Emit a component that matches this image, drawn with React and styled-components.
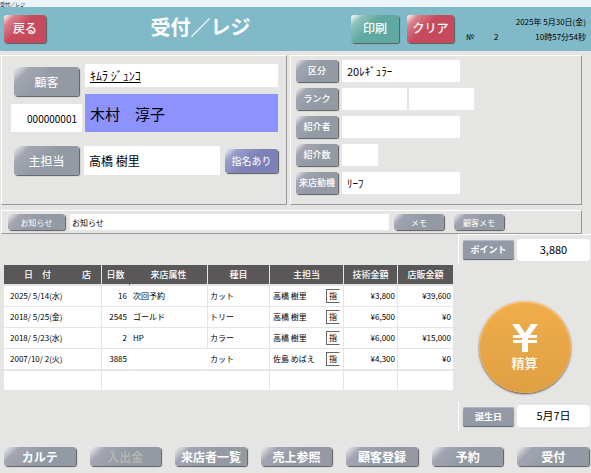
import React, { useState } from "react";
import styled, { createGlobalStyle } from "styled-components";

const history = [
  { date: "2025/ 5/14(水)", days: 16, kind: "次回予約", menu: "カット", staff: "高橋 樹里", tech: "¥3,800", shop: "¥39,600" },
  { date: "2018/ 5/25(金)", days: 2545, kind: "ゴールド", menu: "トリー", staff: "高橋 樹里", tech: "¥6,500", shop: "¥0" },
  { date: "2018/ 5/23(水)", days: 2, kind: "HP", menu: "カラー", staff: "高橋 樹里", tech: "¥6,000", shop: "¥15,000" },
  { date: "2007/10/ 2(火)", days: 3885, kind: "", menu: "カット", staff: "佐島 めばえ", tech: "¥4,300", shop: "¥0", joined: true },
];

const columns = [98, 28, 78, 62, 74, 54, 55];

const menu = [
  { label: "カルテ" },
  { label: "入出金", disabled: true },
  { label: "来店者一覧" },
  { label: "売上参照" },
  { label: "顧客登録" },
  { label: "予約" },
  { label: "受付" },
];

function Field({ label, ...rest }) {
  const [value, setValue] = useState(rest.value || "");
  return (
    <Input
      {...rest}
      aria-label={label}
      value={value}
      onChange={(e) => setValue(e.target.value)}
    />
  );
}

function App() {
  return (
    <>
      <GlobalStyle />
      <Page>
        <WindowBar>受付／レジ</WindowBar>
        <Header>
          <HeaderButton $color="#c74a5c" $width={42}>戻る</HeaderButton>
          <h1>受付／レジ</h1>
          <HeaderButton $color="#5fa9a0" $width={48}>印刷</HeaderButton>
          <HeaderButton $color="#c74a5c" $width={47}>クリア</HeaderButton>
          <Clock>
            <div>2025年 5月30日(金)</div>
            <div className="time">
              <span>№</span>
              <span>2</span>
              <span className="right">10時57分54秒</span>
            </div>
          </Clock>
        </Header>

        <Panels>
          <Panel>
            <Customer>
              <div className="code">
                <PanelButton>顧客</PanelButton>
                <Field label="顧客番号" value="000000001" $height={28} $align="right" $size={10} />
              </div>
              <div className="names">
                <Field label="フリガナ" value="ｷﾑﾗ ｼﾞｭﾝｺ" $height={23} $size={12} $underline />
                <Field label="氏名" value="木村　淳子" $height={38} $size={15} $bg="#8c93ff" />
              </div>
            </Customer>
            <Staff>
              <PanelButton>主担当</PanelButton>
              <Field label="主担当" value="高橋 樹里" $height={29} $size={12} />
              <Nominate>指名あり</Nominate>
            </Staff>
          </Panel>
          <Panel>
            <Attributes>
              <Attribute>
                <SmallButton>区分</SmallButton>
                <Field label="区分" value="20ﾚｷﾞｭﾗｰ" $width={118} $height={22} $size={11} />
              </Attribute>
              <Attribute>
                <SmallButton>ランク</SmallButton>
                <Pair>
                  <Field label="ランク" $width={65} $height={22} />
                  <Field label="ランク名" $width={65} $height={22} />
                </Pair>
              </Attribute>
              <Attribute>
                <SmallButton>紹介者</SmallButton>
                <Field label="紹介者" $width={118} $height={22} />
              </Attribute>
              <Attribute>
                <SmallButton>紹介数</SmallButton>
                <Field label="紹介数" $width={36} $height={22} />
              </Attribute>
              <Attribute>
                <SmallButton>来店動機</SmallButton>
                <Field label="来店動機" value="ﾘｰﾌ" $width={118} $height={22} $size={11} />
              </Attribute>
            </Attributes>
          </Panel>
        </Panels>

        <Notice>
          <NoticeButton $width={57}>お知らせ</NoticeButton>
          <Field label="お知らせ" value="お知らせ" $height={16} $size={8} $pad={2} />
          <div className="memos">
            <NoticeButton $width={50}>メモ</NoticeButton>
            <NoticeButton $width={50}>顧客メモ</NoticeButton>
          </div>
        </Notice>

        <Main>
          <History>
            <colgroup>
              {columns.map((width, index) => (
                <Column key={index} $width={width} />
              ))}
            </colgroup>
            <thead>
              <tr>
                <th>
                  <DateHead>
                    <span>日　付</span>
                    <span>店</span>
                  </DateHead>
                </th>
                <th className="joined">日数</th>
                <th>来店属性</th>
                <th>種目</th>
                <th>主担当</th>
                <th>技術金額</th>
                <th>店販金額</th>
              </tr>
            </thead>
            <tbody>
              {history.map((row) => (
                <tr key={row.date}>
                  <td>{row.date}</td>
                  <td className="num joined">{row.days}</td>
                  <td className={row.joined ? "joined" : ""}>{row.kind}</td>
                  <td className="item">{row.menu}</td>
                  <td>
                    <StaffCell>
                      {row.staff}
                      <Mark>指</Mark>
                    </StaffCell>
                  </td>
                  <td className="num">{row.tech}</td>
                  <td className="num">{row.shop}</td>
                </tr>
              ))}
              <tr className="blank">
                <td />
                <td className="joined" />
                <td className="joined" />
                <td />
                <td />
                <td />
                <td />
              </tr>
            </tbody>
          </History>

          <Side>
            <Info $top>
              <InfoButton>ポイント</InfoButton>
              <output>3,880</output>
            </Info>
            <PayButton>
              <svg viewBox="0 0 26 28" aria-hidden="true">
                <path
                  d="M0 0H7L13 9L19 0H26L18 11H25V14H16V16H25V19H16V28H10V19H1V16H10V14H1V11H8Z"
                  fill="#fff"
                />
              </svg>
              <span>精算</span>
            </PayButton>
            <Info>
              <InfoButton>誕生日</InfoButton>
              <output>5月7日</output>
            </Info>
          </Side>
        </Main>

        <Footer>
          {menu.map((item) => (
            <FooterButton key={item.label} disabled={item.disabled}>
              {item.label}
            </FooterButton>
          ))}
        </Footer>
      </Page>
    </>
  );
}

const GlobalStyle = createGlobalStyle`
  * {
    box-sizing: border-box;
  }
  body {
    margin: 0;
    background: #e5e5e4;
    color: #000;
    font-family: "Noto Sans CJK JP", sans-serif;
    font-size: 9px;
  }
`;

const Page = styled.div`
  display: flex;
  flex-direction: column;
`;

const WindowBar = styled.div`
  background: #edf3fb;
  font-size: 5px;
  line-height: 7px;
`;

const Header = styled.header`
  display: flex;
  align-items: center;
  gap: 8px;
  height: 44px;
  padding: 0 5px 0 4px;
  background: #80bac9;
  h1 {
    flex: 1;
    margin: 0;
    color: #fff;
    text-align: center;
    font-size: 20px;
    line-height: 32px;
    padding: 0 0 4px 4px;
  }
`;

const BaseButton = styled.button`
  flex: none;
  padding: 0;
  border: 0;
  border-radius: 3px;
  color: #fff;
  font-family: inherit;
  white-space: nowrap;
  cursor: pointer;
  background: linear-gradient(135deg, #f2f2f4 0, #a2a5b1 18%, #939aa4 50%);
  box-shadow: 1px 1px 1px #5b5b60;
`;

const HeaderButton = styled(BaseButton)`
  width: ${(p) => p.$width}px;
  height: 28px;
  padding-bottom: 4px;
  font-size: 12px;
  font-weight: 500;
  background: linear-gradient(
    135deg,
    #fff 0,
    color-mix(in srgb, ${(p) => p.$color} 70%, #fff) 16%,
    ${(p) => p.$color} 42%
  );
`;

const Clock = styled.div`
  display: flex;
  flex-direction: column;
  width: 124px;
  font-size: 8px;
  line-height: 15px;
  text-align: right;
  .time {
    display: flex;
    gap: 20px;
    padding-left: 4px;
  }
  .right {
    flex: 1;
  }
`;

const Panels = styled.div`
  display: grid;
  grid-template-columns: 286fr 292fr;
  gap: 3px;
  padding: 4px 9px 0 1px;
`;

const Panel = styled.section`
  height: 150px;
  padding: 8px 8px 0 9px;
  border: 1px solid #fff;
  border-right-color: #999;
  border-bottom-color: #999;
`;

const Input = styled.input`
  flex: ${(p) => (p.$width ? "none" : "1 1 0")};
  min-width: 0;
  width: ${(p) => (p.$width ? `${p.$width}px` : "100%")};
  height: ${(p) => p.$height}px;
  padding: 0 ${(p) => p.$pad || 5}px;
  border: 0;
  outline: 0;
  color: #000;
  background: ${(p) => p.$bg || "#fff"};
  font-family: inherit;
  font-size: ${(p) => p.$size || 11}px;
  text-align: ${(p) => p.$align || "left"};
  text-decoration: ${(p) => (p.$underline ? "underline" : "none")};
`;

const Customer = styled.div`
  display: flex;
  gap: 3px;
  .code {
    display: flex;
    flex-direction: column;
    align-items: center;
    justify-content: space-between;
    width: 71px;
    padding-top: 3px;
  }
  .names {
    display: flex;
    flex: 1;
    flex-direction: column;
    gap: 7px;
  }
  input {
    flex: none;
  }
`;

const PanelButton = styled(BaseButton)`
  width: 65px;
  height: 29px;
  font-size: 12px;
`;

const Staff = styled.div`
  display: flex;
  align-items: center;
  gap: 5px;
  margin-top: 14px;
  padding-left: 3px;
`;

const Nominate = styled(BaseButton)`
  width: 53px;
  height: 24px;
  font-size: 10px;
  background: linear-gradient(135deg, #f2f2f8 0, #989dc9 18%, #7c82b7 50%);
`;

const Attributes = styled.div`
  display: flex;
  flex-direction: column;
  gap: 6px;
  margin: -4px 0 0 -4px;
`;

const Attribute = styled.div`
  display: flex;
  gap: 4px;
`;

const Pair = styled.div`
  display: flex;
  gap: 2px;
`;

const SmallButton = styled(BaseButton)`
  width: 42px;
  height: 22px;
  padding-bottom: 2px;
  border-radius: 2px;
  font-size: 9px;
  font-weight: 500;
`;

const Notice = styled.section`
  display: flex;
  align-items: center;
  gap: 5px;
  height: 24px;
  margin: 5px 9px 0 1px;
  padding: 0 77px 0 6px;
  border: 1px solid #fff;
  border-right-color: #999;
  border-bottom-color: #999;
  .memos {
    display: flex;
    gap: 10px;
  }
`;

const NoticeButton = styled(BaseButton)`
  width: ${(p) => p.$width}px;
  height: 16px;
  font-size: 8px;
`;

const Main = styled.main`
  display: flex;
  align-items: flex-start;
  gap: 5px;
  padding-left: 4px;
`;

const Column = styled.col`
  width: ${(p) => p.$width}px;
`;

const History = styled.table`
  flex: 1;
  table-layout: fixed;
  margin-top: 31px;
  border-collapse: separate;
  border-spacing: 0;
  font-size: 8px;
  line-height: 12px;
  white-space: nowrap;
  th,
  td {
    height: 21px;
    padding: 0 3px;
    border-right: 1px solid #e5e5e4;
    border-bottom: 1px solid #e5e5e4;
    background: #fff;
  }
  th {
    border-bottom-width: 2px;
    background: #5a5758;
    color: #fff;
    font-size: 9px;
    font-weight: 500;
  }
  td:first-child {
    padding-left: 6px;
  }
  th:last-child,
  td:last-child {
    border-right: 0;
  }
  td.joined {
    border-right-color: #fff;
  }
  th.joined {
    border-right-color: #5a5758;
  }
  .num {
    text-align: right;
    padding-right: 2px;
  }
  .item {
    padding-left: 2px;
  }
  .blank td {
    border-top: 1px solid #e5e5e4;
  }
`;

const DateHead = styled.div`
  display: flex;
  justify-content: space-between;
  padding: 0 7px 0 17px;
`;

const StaffCell = styled.div`
  display: flex;
  align-items: center;
  justify-content: space-between;
`;

const Mark = styled.span`
  padding: 0 2px;
  border: 1px solid #666;
  border-right-color: #fff;
`;

const Side = styled.aside`
  display: flex;
  flex-direction: column;
  align-items: center;
  width: 133px;
`;

const Info = styled.div`
  display: flex;
  align-items: center;
  gap: 3px;
  align-self: stretch;
  height: 30px;
  padding: 0 1px 0 4px;
  border-left: 1px solid #fff;
  border-top: ${(p) => (p.$top ? "1px solid #fff" : "0")};
  output {
    flex: 1;
    height: 22px;
    border-radius: 4px;
    background: #fff;
    text-align: center;
    font-size: 11px;
    line-height: 21px;
  }
`;

const InfoButton = styled(BaseButton)`
  width: 51px;
  height: 19px;
  border-radius: 2px;
  font-size: 9px;
  font-weight: 700;
  background: #939aa6;
  box-shadow: inset 0 1px 1px #b9b9d0, 0 1px 1px #5b5f68;
`;

const PayButton = styled(BaseButton)`
  display: flex;
  flex-direction: column;
  align-items: center;
  justify-content: center;
  gap: 3px;
  width: 92px;
  height: 92px;
  margin: 37px 0 8px;
  border-radius: 50%;
  background: linear-gradient(#f0ad4b, #dfa043);
  box-shadow: inset 0 1px 2px #fbd3a0, 0 1px 2px #5e4a2c;
  svg {
    width: 26px;
    height: 28px;
  }
  span {
    font-size: 13px;
    line-height: 16px;
    font-weight: 500;
  }
`;

const Footer = styled.nav`
  display: grid;
  grid-template-columns: repeat(7, 1fr);
  gap: 14px;
  padding: 16px 2px 7px 4px;
`;

const FooterButton = styled(BaseButton)`
  height: 19px;
  font-size: 12px;
  line-height: 18px;
  font-weight: 700;
  &:disabled {
    color: #b5b5b0;
    cursor: default;
  }
`;

export default App;
